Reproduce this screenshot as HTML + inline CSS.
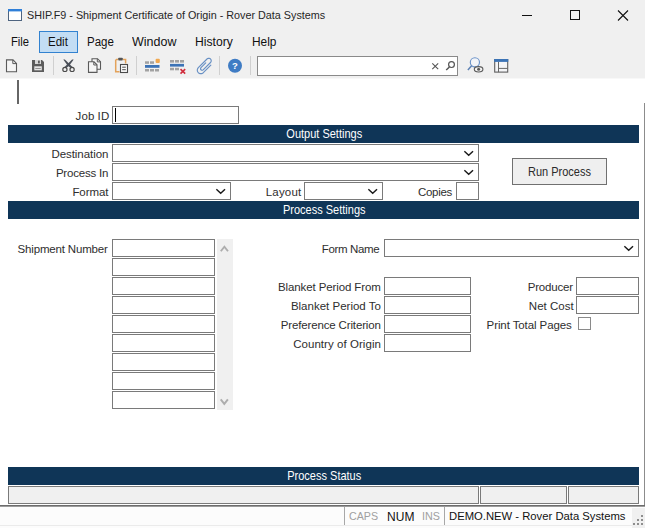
<!DOCTYPE html>
<html><head><meta charset="utf-8">
<style>
*{box-sizing:border-box;margin:0;padding:0}
html,body{width:645px;height:528px;overflow:hidden;background:#f0f0f0;font-family:"Liberation Sans",sans-serif;}
body{position:relative;color:#1a1a1a}
.abs{position:absolute}
.t{position:absolute;white-space:pre;line-height:normal}
.box{position:absolute;background:#fff;border:1px solid #7a7a7a}
.bar{position:absolute;left:8px;width:631px;padding-left:1.5px;height:18px;background:#0f3557;color:#fff;font-size:11px;line-height:18px;text-align:center}
.bar span,.btn span{display:inline-block;transform:scaleY(1.13);transform-origin:50% 70%;position:relative;top:0.4px}
.sep{position:absolute;top:56px;width:1px;height:19px;background:#d0d0d0}
</style></head><body>
<!-- title bar -->
<svg class="abs" style="left:8px;top:9px" width="14" height="12" viewBox="0 0 14 12"><rect x="0.5" y="0.5" width="13" height="11" fill="#fff" stroke="#4e6480"/><rect x="0" y="0" width="14" height="2.400" fill="#2f7fd8"/></svg>
<svg class="abs" style="left:518px;top:5px" width="120" height="20" viewBox="0 0 120 20"><path d="M4 10.5H14" stroke="#111" stroke-width="1"/><rect x="52.500" y="5.500" width="9" height="9" fill="none" stroke="#111"/><path d="M100 5.500L110 15.500M110 5.500L100 15.500" stroke="#111" stroke-width="1.100"/></svg>
<!-- menu -->
<div class="abs" style="left:39px;top:31px;width:39px;height:22px;background:#c3ddf4;border:1px solid #3282d0"></div>
<!-- toolbar -->
<div class="sep" style="left:53px"></div><div class="sep" style="left:136px"></div><div class="sep" style="left:219px"></div><div class="sep" style="left:250px"></div>
<div class="box" style="left:257px;top:56px;width:201px;height:20px;border-color:#8a8a8a"></div>
<svg class="abs" style="left:0;top:54px" width="645" height="24" viewBox="0 54 645 24">
<!-- new -->
<path d="M6.500 59.900H13L16.500 63.400V71.700H6.500Z" fill="#f5f5f5" stroke="#5a5a5a" stroke-width="1.100"/><path d="M12.800 60V63.600H16.400" fill="none" stroke="#5a5a5a" stroke-width="1"/>
<!-- save -->
<path d="M32 60H42L44 62V72H32Z" fill="#5c5c5c"/><rect x="35" y="60" width="6" height="4" fill="#d8d8d8"/><rect x="38" y="60.600" width="1.800" height="2.800" fill="#5c5c5c"/><rect x="34.300" y="66.300" width="7.500" height="4" fill="#e6e6e6"/><rect x="35.300" y="68" width="5.500" height="0.900" fill="#8a8a8a"/>
<!-- scissors -->
<path d="M63.300 59.400L64.900 59.500L72.700 67.300L70.900 68.300L67.600 65.400Z" fill="#4a4f58"/><path d="M73.700 59.400L72.100 59.500L64.300 67.300L66.100 68.300L69.400 65.400Z" fill="#4a4f58"/>
<circle cx="64.900" cy="69.400" r="2.100" fill="#f0f0f0" stroke="#4a4a4a" stroke-width="1.200"/><circle cx="72.100" cy="69.400" r="2.100" fill="#f0f0f0" stroke="#4a4a4a" stroke-width="1.200"/>
<!-- copy -->
<path d="M92 58.700H97.500L100.500 61.700V69.300H92Z" fill="#f6f6f6" stroke="#5a5a5a" stroke-width="1.100"/><path d="M97.300 58.800V61.900H100.400" fill="none" stroke="#5a5a5a"/>
<path d="M88.500 61.800H94L97 64.800V72.400H88.500Z" fill="#f6f6f6" stroke="#5a5a5a" stroke-width="1.100"/><path d="M93.800 61.900V65H96.900" fill="none" stroke="#5a5a5a"/>
<!-- paste -->
<path d="M115.700 59.500V71.800H119.500" fill="none" stroke="#e3a25a" stroke-width="1.500"/><path d="M116 59.600H118M123 59.600H125.600V63.500" fill="none" stroke="#e3a25a" stroke-width="1.500"/>
<rect x="118.200" y="57.800" width="4.600" height="2.800" rx="0.800" fill="#555"/>
<rect x="120.500" y="64.500" width="7" height="8" fill="#fafafa" stroke="#4a4a4a" stroke-width="1.100"/><path d="M122.200 67.200H125.800M122.200 69.700H125.800" stroke="#4a4a4a" stroke-width="1"/>
<!-- grid add -->
<g fill="#a2a2a2"><rect x="145" y="61.300" width="4" height="2.500"/><rect x="150" y="61.300" width="4" height="2.500"/><rect x="145" y="69" width="4" height="2.500"/><rect x="150" y="69" width="4" height="2.500"/><rect x="155" y="69" width="4" height="2.500"/></g>
<rect x="145" y="65" width="14.500" height="2.800" fill="#3c73b6"/>
<rect x="155.600" y="58.800" width="4.200" height="4.200" rx="1" fill="#f0a850"/>
<!-- grid delete -->
<g fill="#a2a2a2"><rect x="170" y="60" width="4" height="2.600"/><rect x="175" y="60" width="4" height="2.600"/><rect x="180" y="60" width="4" height="2.600"/><rect x="170" y="67.800" width="4" height="2.500"/><rect x="175" y="67.800" width="4" height="2.500"/></g>
<rect x="170" y="63.900" width="14" height="2.700" fill="#3c73b6"/>
<path d="M180.500 69.200L185.200 73.600M185.200 69.200L180.500 73.600" stroke="#d02c3c" stroke-width="1.600"/>
<!-- paperclip -->
<path d="M210.84 65.17L203.33 72.68L202.44 73.33L201.38 73.67L200.27 73.67L199.22 73.33L198.32 72.68L197.67 71.78L197.33 70.73L197.33 69.62L197.67 68.56L198.32 67.67L207.00 58.99L207.63 58.54L208.37 58.30L209.14 58.30L209.88 58.54L210.51 58.99L210.96 59.62L211.20 60.36L211.20 61.13L210.96 61.87L210.51 62.50L203.16 69.84L202.78 70.12L202.32 70.27L201.84 70.27L201.38 70.12L200.99 69.84L200.71 69.45L200.56 68.99L200.56 68.51L200.71 68.06L200.99 67.67L205.75 62.91" fill="none" stroke="#6890c4" stroke-width="1.150" stroke-linecap="round" stroke-linejoin="round"/>
<!-- help -->
<circle cx="235" cy="65.800" r="7" fill="#3f7cc4"/>
<text x="235" y="69.300" font-family="Liberation Sans" font-weight="bold" font-size="9.500" fill="#fff" text-anchor="middle">?</text>
<!-- search x -->
<path d="M432.300 63.300L438.200 69.200M438.200 63.300L432.300 69.200" stroke="#555" stroke-width="1.100"/>
<!-- search magnifier -->
<circle cx="451.500" cy="64.600" r="2.900" fill="none" stroke="#555" stroke-width="1.200"/><path d="M449.400 66.900L446.200 70.100" stroke="#555" stroke-width="1.400"/>
<!-- find -->
<circle cx="474.900" cy="62.300" r="4.600" fill="#f2f4f8" stroke="#6a92c8" stroke-width="1.150"/><path d="M471.600 65.800L467.900 69.900" stroke="#5f83b5" stroke-width="1.500"/>
<ellipse cx="478.600" cy="69.300" rx="4.300" ry="2.700" fill="#f6f6f6" stroke="#5a5a5a" stroke-width="1.100"/><circle cx="478.600" cy="69.300" r="1.500" fill="#5a5a5a"/>
<!-- layout -->
<rect x="494.700" y="59.600" width="13" height="12.500" fill="#f4f5f7" stroke="#5e5e5e" stroke-width="1.100"/><rect x="494.150" y="59" width="14.100" height="2.900" fill="#3b73b5"/><path d="M498.500 61.900V72.100M498.500 68.400H507.700" stroke="#666" stroke-width="1"/>
</svg>

<!-- content -->
<div class="abs" style="left:0;top:78px;width:645px;height:1px;background:#f8f8f8"></div>
<div class="abs" style="left:0;top:79px;width:645px;height:426px;background:#fff"></div>
<div class="abs" style="left:644px;top:103px;width:1px;height:402px;background:#8c8c8c"></div>
<div class="abs" style="left:0;top:505px;width:645px;height:1px;background:#6c6c6c"></div>
<div class="abs" style="left:0;top:506px;width:645px;height:1px;background:#9c9c9c"></div>
<div class="abs" style="left:17px;top:80px;width:2px;height:24px;background:#666"></div>

<div class="box" style="left:112px;top:106px;width:127px;height:18px"></div>
<div class="abs" style="left:115px;top:108px;width:1px;height:14px;background:#000"></div>

<div class="bar" style="top:125px"><span>Output Settings</span></div>
<div class="box" style="left:112px;top:144px;width:367px;height:18px"></div>
<div class="box" style="left:112px;top:163px;width:367px;height:18px"></div>
<div class="box" style="left:112px;top:182px;width:119px;height:18px"></div>
<div class="box" style="left:304px;top:182px;width:79px;height:18px"></div>
<div class="box" style="left:456px;top:182px;width:23px;height:18px"></div>
<div class="abs btn" style="left:512px;top:158px;width:95px;height:27px;background:#efefef;border:1px solid #707070;font-size:11px;line-height:27px;text-align:center;color:#2a2a2a"><span>Run Process</span></div>
<div class="bar" style="top:201px"><span>Process Settings</span></div>

<div class="box" style="left:112px;top:239px;width:103px;height:18px;"></div><div class="box" style="left:112px;top:258px;width:103px;height:18px;"></div><div class="box" style="left:112px;top:277px;width:103px;height:18px;"></div><div class="box" style="left:112px;top:296px;width:103px;height:18px;"></div><div class="box" style="left:112px;top:315px;width:103px;height:18px;"></div><div class="box" style="left:112px;top:334px;width:103px;height:18px;"></div><div class="box" style="left:112px;top:353px;width:103px;height:18px;"></div><div class="box" style="left:112px;top:372px;width:103px;height:18px;"></div><div class="box" style="left:112px;top:391px;width:103px;height:18px;"></div>
<div class="abs" style="left:217px;top:239px;width:16px;height:171px;background:#f0f0f0"></div>
<div class="box" style="left:384px;top:239px;width:255px;height:18px"></div>

<div class="box" style="left:384px;top:277px;width:87px;height:18px"></div>
<div class="box" style="left:384px;top:296px;width:87px;height:18px"></div>
<div class="box" style="left:384px;top:315px;width:87px;height:18px"></div>
<div class="box" style="left:384px;top:334px;width:87px;height:18px"></div>

<div class="box" style="left:576px;top:277px;width:63px;height:18px"></div>
<div class="box" style="left:576px;top:296px;width:63px;height:18px"></div>
<div class="box" style="left:578px;top:317px;width:13px;height:13px;border-color:#8a8a8a"></div>

<div class="bar" style="top:467px"><span>Process Status</span></div>
<div class="box" style="left:8px;top:486px;width:471px;height:18px;background:#f0f0f0"></div>
<div class="box" style="left:480px;top:486px;width:87px;height:18px;background:#f0f0f0"></div>
<div class="box" style="left:568px;top:486px;width:71px;height:18px;background:#f0f0f0"></div>

<!-- status bar -->
<div class="abs" style="left:0;top:507px;width:645px;height:21px;background:#fcfcfc"></div>
<div class="abs" style="left:0;top:525px;width:632px;height:1px;background:#ebebeb"></div>
<div class="abs" style="left:632px;top:508px;width:13px;height:20px;background:#f0f0f0"></div>
<svg class="abs" style="left:632px;top:513px" width="13" height="13" viewBox="0 0 13 13" fill="#8e8e8e"><rect x="9" y="2" width="2" height="2"/><rect x="5" y="6" width="2" height="2"/><rect x="9" y="6" width="2" height="2"/><rect x="1" y="10" width="2" height="2"/><rect x="5" y="10" width="2" height="2"/><rect x="9" y="10" width="2" height="2"/></svg>
<div class="abs" style="left:344px;top:507px;width:1px;height:18px;background:#a8a8a8"></div>
<div class="abs" style="left:444px;top:507px;width:1px;height:18px;background:#a8a8a8"></div>
<svg class="abs" style="left:0;top:0" width="645" height="528" viewBox="0 0 645 528"><path d="M464.9 151.7L468.7 155.3L472.5 151.7" fill="none" stroke="#1a1a1a" stroke-width="1.45" stroke-linecap="square" stroke-linejoin="miter"/><path d="M464.9 170.7L468.7 174.3L472.5 170.7" fill="none" stroke="#1a1a1a" stroke-width="1.45" stroke-linecap="square" stroke-linejoin="miter"/><path d="M216.89999999999998 189.7L220.7 193.3L224.49999999999997 189.7" fill="none" stroke="#1a1a1a" stroke-width="1.45" stroke-linecap="square" stroke-linejoin="miter"/><path d="M368.9 189.7L372.7 193.3L376.5 189.7" fill="none" stroke="#1a1a1a" stroke-width="1.45" stroke-linecap="square" stroke-linejoin="miter"/><path d="M624.9000000000001 246.7L628.7 250.3L632.5000000000001 246.7" fill="none" stroke="#1a1a1a" stroke-width="1.45" stroke-linecap="square" stroke-linejoin="miter"/><path d="M221.4 250.5L224.4 246.7L227.4 250.5" fill="none" stroke="#adadad" stroke-width="1.9" stroke-linecap="square" stroke-linejoin="miter"/><path d="M221.3 400.1L224.3 403.9L227.3 400.1" fill="none" stroke="#adadad" stroke-width="1.9" stroke-linecap="square" stroke-linejoin="miter"/></svg>
<div class="t" style="left:27.20px;top:8.79px;font-size:11.5px;transform:scaleX(0.9375);transform-origin:0 0;color:#262626">SHIP.F9 - Shipment Certificate of Origin - Rover Data Systems</div>
<div class="t" style="left:11.10px;top:34.69px;font-size:12.5px;transform:scaleX(0.8980);transform-origin:0 0;color:#111">File</div>
<div class="t" style="left:47.80px;top:34.69px;font-size:12.5px;transform:scaleX(0.9236);transform-origin:0 0;color:#111">Edit</div>
<div class="t" style="left:86.70px;top:34.69px;font-size:12.5px;transform:scaleX(0.9211);transform-origin:0 0;color:#111">Page</div>
<div class="t" style="left:131.70px;top:34.69px;font-size:12.5px;transform:scaleX(0.9985);transform-origin:0 0;color:#111">Window</div>
<div class="t" style="left:195.20px;top:34.69px;font-size:12.5px;transform:scaleX(0.9716);transform-origin:0 0;color:#111">History</div>
<div class="t" style="left:252.20px;top:34.69px;font-size:12.5px;transform:scaleX(0.9526);transform-origin:0 0;color:#111">Help</div>
<div class="t" style="left:75.60px;top:109.59px;font-size:11.5px;letter-spacing:0.070px;color:#2e2e2e">Job ID</div>
<div class="t" style="left:51.40px;top:147.59px;font-size:11.5px;letter-spacing:-0.055px;color:#2e2e2e">Destination</div>
<div class="t" style="left:55.90px;top:166.59px;font-size:11.5px;letter-spacing:-0.203px;color:#2e2e2e">Process In</div>
<div class="t" style="left:72.40px;top:185.59px;font-size:11.5px;letter-spacing:-0.084px;color:#2e2e2e">Format</div>
<div class="t" style="left:265.80px;top:185.59px;font-size:11.5px;letter-spacing:0.174px;color:#2e2e2e">Layout</div>
<div class="t" style="left:418.10px;top:185.59px;font-size:11.5px;letter-spacing:-0.342px;color:#2e2e2e">Copies</div>
<div class="t" style="left:17.60px;top:242.59px;font-size:11.5px;letter-spacing:-0.171px;color:#2e2e2e">Shipment Number</div>
<div class="t" style="left:321.80px;top:242.59px;font-size:11.5px;letter-spacing:-0.350px;color:#2e2e2e">Form Name</div>
<div class="t" style="left:277.90px;top:280.59px;font-size:11.5px;letter-spacing:-0.102px;color:#2e2e2e">Blanket Period From</div>
<div class="t" style="left:290.90px;top:299.59px;font-size:11.5px;letter-spacing:0.004px;color:#2e2e2e">Blanket Period To</div>
<div class="t" style="left:280.80px;top:318.59px;font-size:11.5px;letter-spacing:-0.148px;color:#2e2e2e">Preference Criterion</div>
<div class="t" style="left:293.20px;top:337.59px;font-size:11.5px;letter-spacing:0.048px;color:#2e2e2e">Country of Origin</div>
<div class="t" style="left:527.70px;top:280.59px;font-size:11.5px;letter-spacing:-0.167px;color:#2e2e2e">Producer</div>
<div class="t" style="left:528.80px;top:299.59px;font-size:11.5px;letter-spacing:0.036px;color:#2e2e2e">Net Cost</div>
<div class="t" style="left:486.60px;top:318.59px;font-size:11.5px;letter-spacing:-0.096px;color:#2e2e2e">Print Total Pages</div>
<div class="t" style="left:349.00px;top:510.19px;font-size:11.5px;transform:scaleX(0.9289);transform-origin:0 0;color:#a0a0a0">CAPS</div>
<div class="t" style="left:387.00px;top:509.74px;font-size:12px;letter-spacing:0.136px;color:#111">NUM</div>
<div class="t" style="left:421.70px;top:510.19px;font-size:11.5px;transform:scaleX(0.9337);transform-origin:0 0;color:#a0a0a0">INS</div>
<div class="t" style="left:449.30px;top:510.19px;font-size:11.5px;transform:scaleX(0.9795);transform-origin:0 0;color:#111">DEMO.NEW - Rover Data Systems</div>
</body></html>
